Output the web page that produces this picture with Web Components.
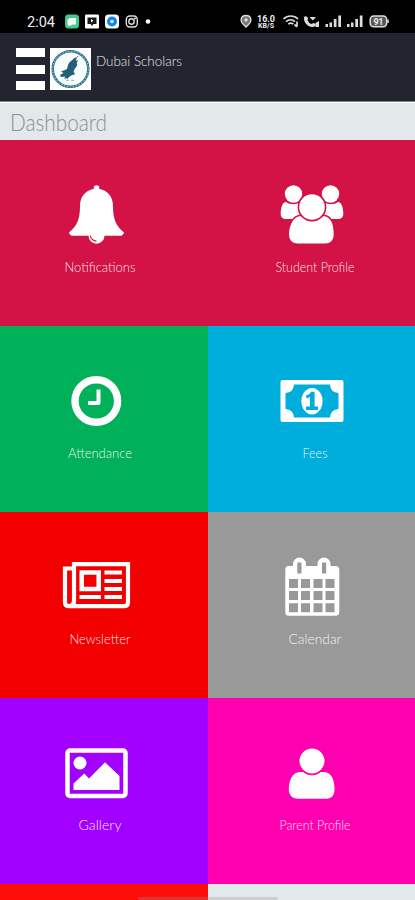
<!DOCTYPE html>
<html lang="en">
<head>
<meta charset="utf-8">
<meta name="viewport" content="width=device-width, initial-scale=1">
<title>Dubai Scholars</title>
<style>
  html, body {
    margin: 0;
    height: 900px;
    overflow: hidden;
    background: #e3e8ea;
    font-family: Lato, "Liberation Sans", sans-serif;
  }
</style>
</head>
<body>
<school-app>
  <status-bar slot="status"></status-bar>
  <app-header slot="header" name="Dubai Scholars"></app-header>
  <page-title slot="title" label="Dashboard"></page-title>

  <dash-tile label="Notifications" size="71" color="#d31245">
    <svg viewBox="0 0 110 87" width="110" height="87" fill="#fff">
      <path d="M43.7 19v-1a2.8 2.8 0 0 1 5.6 0v1C58 20.500 63 27 63 36c0 13 3 20 11 26.500-.5 2-1.500 3.200-3.500 3.200H54.500a8 8 0 0 1-16 0H22.500c-2 0-3-1.200-3.500-3.200C27 56 30 49 30 36c0-9 5-15.500 13.700-17z"/>
      <path d="M40.300 65.500a6.200 6.200 0 0 0 6.200 5.600" fill="none" stroke="#d31245" stroke-width="1.100"/>
    </svg>
  </dash-tile>
  <dash-tile label="Student Profile" size="79" color="#d31245" end>
    <svg viewBox="0 0 110 87" width="110" height="87" fill="#fff">
      <circle cx="33.500" cy="24" r="8.700"/>
      <circle cx="70.500" cy="24" r="8.700"/>
      <path d="M26 32c4 3 10 3 14 0v17H26c-4 0-5.500-2.500-5.300-6 .3-6 1.800-10.500 5.300-11zM78 32c-4 3-10 3-14 0v17h14c4 0 5.500-2.500 5.300-6-.3-6-1.800-10.500-5.300-11z"/>
      <g stroke="#d31245" stroke-width="1.600">
        <path d="M39 45.500h26c6.500 1.500 9.500 9.500 9.500 19 0 6-3.500 9.800-9.500 9.800H38c-6 0-9.800-3.800-9.800-9.800 0-9.500 4.300-17.500 10.800-19z"/>
        <circle cx="52" cy="37" r="13.600"/>
      </g>
    </svg>
  </dash-tile>

  <dash-tile label="Attendance" size="64" color="#00b159">
    <svg viewBox="0 -4 110 87" width="110" height="87" fill="none" stroke="#fff">
      <circle cx="46.300" cy="41" r="21.300" stroke-width="7.400"/>
      <path d="M48.500 29.500v13.500H38" stroke-width="4" stroke-linejoin="round"/>
    </svg>
  </dash-tile>
  <dash-tile label="Fees" size="25" color="#00aedb" end>
    <svg viewBox="0 -4 110 87" width="110" height="87" fill="#fff">
      <path fill-rule="evenodd" d="M22.500 20h59q2 0 2 2v38q0 2-2 2h-59q-2 0-2-2V22q0-2 2-2zM34 24.500q-.5 8-8.500 8.500v16q8 .5 8.500 8.500h36q.5-8 8.500-8.500V33q-8-.5-8.500-8.500z"/>
      <ellipse cx="52" cy="41.200" rx="10.600" ry="13.300"/>
      <path d="M45.800 35.500c2.500-.5 4-1.500 5.300-3.700h3.500v14.700H58V50H46v-3.500h4V36.800q-1.800 1.500-3.200 1.700z" fill="#00aedb"/>
    </svg>
  </dash-tile>

  <dash-tile label="Newsletter" size="61" color="#f20000">
    <svg viewBox="0 -3 110 87" width="110" height="87" fill="none" stroke="#fff" stroke-width="4.200">
      <path d="M24 19.200h54v38q0 4-4 4H19q-4 0-4-4V23.500h9M24 17v39q0 4-4 5"/>
      <path d="M31.700 27.500h17v16.500h-17z" stroke-width="4.500"/>
      <path d="M29.500 52h21.500M54.500 27.500H72M54.500 36H72M54.500 44H72M54.500 52H72"/>
    </svg>
  </dash-tile>
  <dash-tile label="Calendar" size="53" color="#999" end>
    <svg viewBox="0 -3 110 87" width="110" height="87" fill="#fff">
      <path d="M28.500 21H33v-2a6.500 6.500 0 0 1 13 0v2h11.500v-2a6.500 6.500 0 0 1 13 0v2h5q3.800 0 3.800 3.800V67q0 3.800-3.800 3.800h-47q-3.200 0-3.200-3.800V24.800q0-3.800 3.200-3.800z"/>
      <g fill="#999">
        <path d="M37.300 17.500h4.200v11h-4.200zM62 17.500h4.200v11H62z"/>
        <path d="M29 34h9v9h-9zM41 34h9v9h-9zM53.500 34h9v9h-9zM65.500 34h9v9h-9zM29 46h9v9h-9zM41 46h9v9h-9zM53.500 46h9v9h-9zM65.500 46h9v9h-9zM29 58.200h9v9h-9zM41 58.200h9v9h-9zM53.500 58.200h9v9h-9zM65.500 58.200h9v9h-9z"/>
      </g>
    </svg>
  </dash-tile>

  <dash-tile label="Gallery" size="43" color="#a200ff">
    <svg viewBox="0 -2 110 87" width="110" height="87" fill="#fff">
      <rect x="17.500" y="20.500" width="58" height="45.500" rx="2.500" fill="none" stroke="#fff" stroke-width="4.500"/>
      <circle cx="30" cy="33" r="6.500"/>
      <path d="M23.500 60v-6.500L34.300 43.500 39 48.500 55 32.300 69.500 46v14z"/>
    </svg>
  </dash-tile>
  <dash-tile label="Parent Profile" size="71" color="#ff00b1" end>
    <svg viewBox="0 -2 110 87" width="110" height="87" fill="#fff">
      <path d="M39 42h26c6.500 1 9.500 8 9.500 17.500 0 5.500-3 9.200-8 9.200h-29c-5 0-8.700-3.700-8.700-9.200C28.800 50 32.500 43 39 42z"/>
      <circle cx="52" cy="31" r="13.400" stroke="#ff00b1" stroke-width="1.700"/>
    </svg>
  </dash-tile>

  <dash-tile color="#ff0d08"></dash-tile>
</school-app>

<script>
class SchoolApp extends HTMLElement {
  constructor() {
    super();
    this.attachShadow({ mode: "open" });
    this.shadowRoot.innerHTML = `
      <style>
      :host {
        display: flex;
        flex-direction: column;
        width: 100%;
        height: 900px;
        overflow: hidden;
        position: relative;
      }
      .grid {
        display: grid;
        grid-template-columns: 208px 1fr;
        grid-auto-rows: 186px;
      }
      .handle {
        position: absolute;
        left: 138px;
        bottom: 0;
        width: 140px;
        height: 3px;
        border-radius: 2px 2px 0 0;
        background: rgba(150, 150, 150, .3);
      }
      </style>
      <slot name="status"></slot>
      <slot name="header"></slot>
      <slot name="title"></slot>
      <div class="grid"><slot></slot></div>
      <div class="handle"></div>
    `;
  }
}

class StatusBar extends HTMLElement {
  constructor() {
    super();
    this.attachShadow({ mode: "open" });
    this.shadowRoot.innerHTML = `
      <style>
      :host {
        display: flex;
        flex: none;
        height: 33px;
        background: #000;
      }
      svg { display: block; }
      text {
        font-family: Roboto, sans-serif;
        fill: #eee;
      }
      </style>
      <svg width="415" height="33" viewBox="0 0 415 33">
        <text x="27" y="26.500" font-size="14.500" textLength="28" lengthAdjust="spacingAndGlyphs">2:04</text>
        <rect x="65" y="14.500" width="14" height="14" rx="3.500" fill="#45c792"/>
        <path d="M69.500 18h6.500v6.500h-3l-3.500 1.500-2-1v-5z" fill="#eefcf6"/>
        <rect x="85" y="14.500" width="14" height="14" rx="1" fill="#fff"/>
        <path d="M87.500 17.500h9v6.500h-3l-1.500 2-1.500-2h-3z" fill="#17191a"/>
        <path d="M91 19l2.500 1.700-2.500 1.800z" fill="#fff"/>
        <rect x="105" y="14.500" width="14" height="14" rx="3.500" fill="#fff"/>
        <circle cx="112" cy="21.500" r="5" fill="#1284ee"/>
        <circle cx="112" cy="21.500" r="1.800" fill="#d8edff"/>
        <g fill="none" stroke="#ddd" stroke-width="1.400">
          <rect x="126.300" y="16" width="11" height="11" rx="3.500"/>
          <circle cx="131.500" cy="21.500" r="2.700"/>
        </g>
        <circle cx="135" cy="18.500" r="1" fill="#ddd"/>
        <circle cx="148" cy="21.500" r="2.300" fill="#fff"/>

        <path d="M246 15.500c-6 0-6 6-2.500 9l2.500 2.500 2.500-2.500c3.500-3 3.500-9-2.500-9z" fill="#777" stroke="#ddd" stroke-width="1.300"/>
        <circle cx="246" cy="20" r="1.700" fill="#ddd"/>
        <text x="257" y="21.500" font-size="9" font-weight="700" textLength="18" lengthAdjust="spacingAndGlyphs">16.0</text>
        <text x="258" y="28" font-size="6.500" font-weight="700" textLength="16" lengthAdjust="spacingAndGlyphs">KB/S</text>
        <g fill="none" stroke="#ddd" stroke-width="1.700">
          <path d="M283.500 19c4-4 10.500-4 14.500 0M286 21.700c2.700-2.400 6.500-2.400 9 0M288.300 24.200c1.500-1.300 3.500-1.300 5 0"/>
          <path d="M297 21.500v5M294.500 24.500l2.500 2.300"/>
        </g>
        <path d="M304 17q2.500-2 4 1l-.5 2q1 3 4 4l2-1q3 1 2 3-3 2-7 0-5-3-4.500-9z" fill="#ddd"/>
        <path d="M309.500 17h6.500l-3.200 3.500zM315.500 23l3.500-2v6h-3.500z" fill="#ddd"/>
        <g fill="#ddd">
          <path d="M325.500 24h2.500v3h-2.500zM329.500 22.500h2.500v4.500h-2.500zM333.800 19h2.700v8h-2.700zM338.300 15.500h2.700V27h-2.700z"/>
          <path d="M347 24h2.500v3H347zM351 22.500h2.500v4.500H351zM355.300 19h2.700v8h-2.700zM359.800 15.500h2.700V27h-2.700z"/>
        </g>
        <rect x="370.200" y="16" width="16.500" height="10.700" rx="3.500" fill="#55595a" stroke="#ddd" stroke-width="1.500"/>
        <path d="M388 19.500v3.500" stroke="#ddd" stroke-width="1.500"/>
        <text x="373.500" y="24.500" font-size="9" font-weight="700" textLength="10">91</text>
      </svg>
    `;
  }
}

class AppHeader extends HTMLElement {
  connectedCallback() {
    this.attachShadow({ mode: "open" });
    this.shadowRoot.innerHTML = `
      <style>
      :host {
        display: flex;
        flex: none;
        box-sizing: border-box;
        height: 69px;
        padding: 15px 0 0 16px;
        background: #22252f;
        border-bottom: 1px solid #7c8189;
      }
      .menu {
        display: flex;
        flex-direction: column;
        gap: 7.500px;
        width: 28.500px;
        margin-right: 5.500px;
      }
      .menu i {
        height: 9px;
        background: #fff;
      }
      .name { margin: 3px 0 0 5px; }
      </style>
      <div class="menu"><i></i><i></i><i></i></div>
      <svg width="41" height="42" viewBox="0 0 41 42">
        <path d="M0 0h41v42H0z" fill="#fff"/>
        <circle cx="20.500" cy="21" r="17.800" fill="#f8fcfd" stroke="#2b7088" stroke-width="2.500"/>
        <circle cx="20.500" cy="21" r="17.800" fill="none" stroke="#a4c4ce" stroke-width="1.100" stroke-dasharray="1.500 1.500"/>
        <path d="M27 8l-1 5 2-1-1.500 4 1 1-2.500 3.500-1.500 3 1.500 3-3 .5-3 2-1.500 2-1-1-2 1 .5-2.500-4 .5-1-2 3.500-2-2.500-1.500 4-1.500 2-1q1-6 4-8 3-3.500 8-5z" fill="#235f76"/>
        <path d="M16 32.300h3M21 32.300h3" stroke="#8fb0ba"/>
      </svg>
      <svg class="name" width="100" height="20">
        <text x="0" y="15" font-size="13.500" font-weight="300" fill="#e8e9ec" textLength="86" lengthAdjust="spacingAndGlyphs">${this.getAttribute("name")}</text>
      </svg>
    `;
  }
}

class PageTitle extends HTMLElement {
  connectedCallback() {
    this.attachShadow({ mode: "open" });
    this.shadowRoot.innerHTML = `
      <style>
      :host {
        display: block;
        flex: none;
        box-sizing: border-box;
        height: 38px;
        padding-left: 10px;
        background: #e3e8ea;
        border-top: 1px solid #fbfcfc;
      }
      </style>
      <svg width="120" height="36">
        <text x="0" y="28" font-size="23" font-weight="300" fill="#8b8f93" textLength="97" lengthAdjust="spacingAndGlyphs">${this.getAttribute("label")}</text>
      </svg>
    `;
  }
}

class DashTile extends HTMLElement {
  connectedCallback() {
    const label = this.getAttribute("label") || "";
    const size = this.getAttribute("size") || 0;
    this.attachShadow({ mode: "open" });
    this.shadowRoot.innerHTML = `
      <style>
      :host {
        display: flex;
        flex-direction: column;
        box-sizing: border-box;
        padding: 30px 0 0 50px;
        background: ${this.getAttribute("color")};
      }
      :host([end]) { padding-left: 52px; }
      ::slotted(svg) {
        display: block;
        flex: none;
      }
      .label {
        flex: none;
        margin-left: -5px;
      }
      :host([end]) .label { margin-left: 0; }
      </style>
      <slot></slot>
      ${label && `<svg class="label" width="110" height="20">
        <text x="${55 - size / 2}" y="14.500" font-size="13" font-weight="300" fill="#fff" fill-opacity=".9"
          textLength="${size}" lengthAdjust="spacingAndGlyphs">${label}</text>
      </svg>`}
    `;
  }
}

customElements.define("school-app", SchoolApp);
customElements.define("status-bar", StatusBar);
customElements.define("app-header", AppHeader);
customElements.define("page-title", PageTitle);
customElements.define("dash-tile", DashTile);
</script>
</body>
</html>
